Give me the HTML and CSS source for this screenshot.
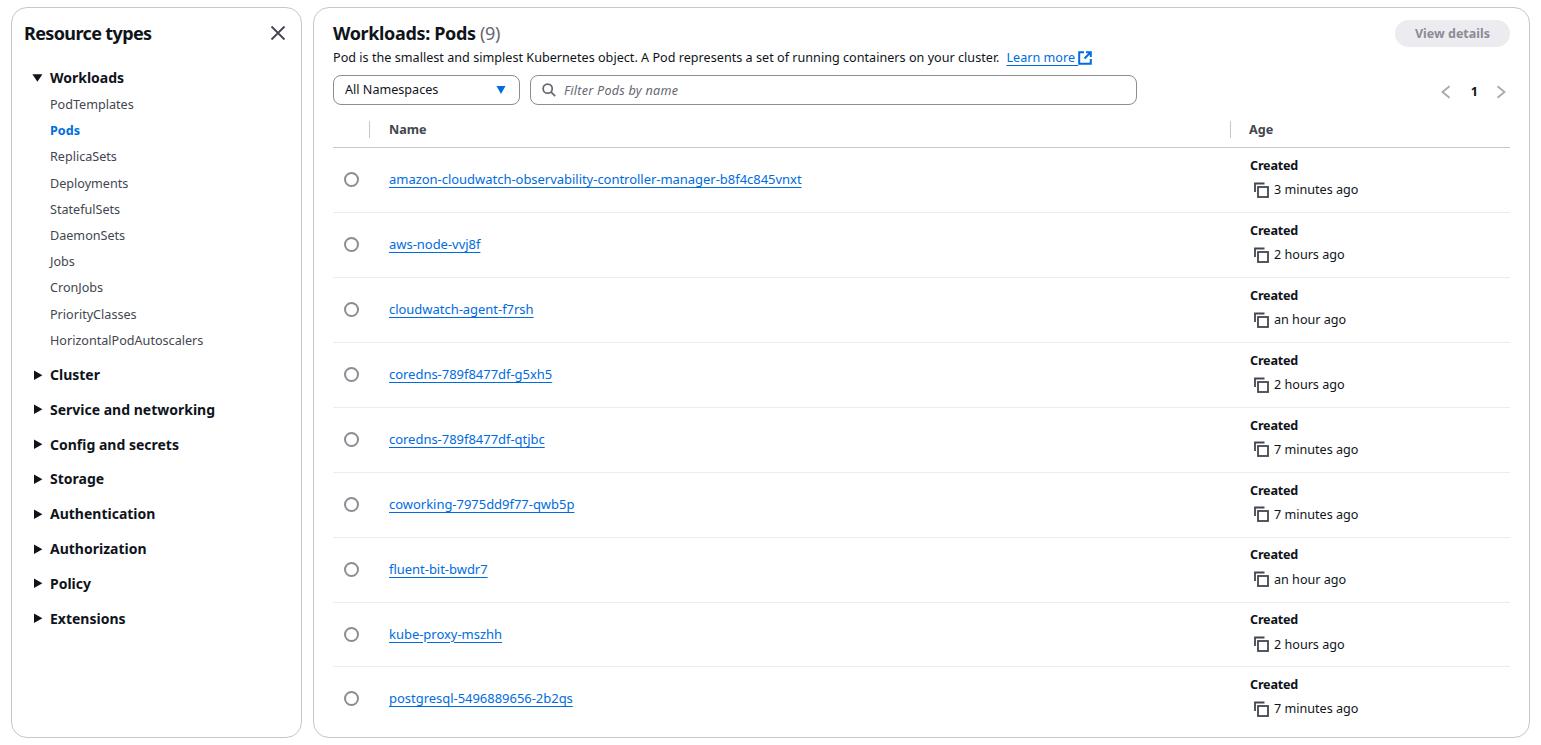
FILE: index.html
```html
<!DOCTYPE html>
<html lang="en">
<head>
<meta charset="utf-8">
<title>Workloads: Pods</title>
<link rel="stylesheet" href="styles.css">
</head>
<body>
<div class="page">
  <aside class="side">
    <div class="side-head">
      <h2 class="side-title">Resource types</h2>
      <svg class="close" width="16" height="16" viewBox="0 0 16 16"><path d="M1.5 1.5l13 13M14.5 1.5l-13 13"/></svg>
    </div>
    <nav class="nav">
      <div class="group open">
        <svg class="caret" width="12" height="12" viewBox="0 0 12 12"><path d="M0.4 3.3h10L5.4 10.7z"/></svg>
        <span>Workloads</span>
      </div>
      <ul class="sublist">
        <li>PodTemplates</li>
        <li class="active">Pods</li>
        <li>ReplicaSets</li>
        <li>Deployments</li>
        <li>StatefulSets</li>
        <li>DaemonSets</li>
        <li>Jobs</li>
        <li>CronJobs</li>
        <li>PriorityClasses</li>
        <li>HorizontalPodAutoscalers</li>
      </ul>
      <div class="group"><svg class="caret" width="12" height="12" viewBox="0 0 12 12"><path d="M2 1.5v9.6L10.4 6.3z"/></svg><span>Cluster</span></div>
      <div class="group"><svg class="caret" width="12" height="12" viewBox="0 0 12 12"><path d="M2 1.5v9.6L10.4 6.3z"/></svg><span>Service and networking</span></div>
      <div class="group"><svg class="caret" width="12" height="12" viewBox="0 0 12 12"><path d="M2 1.5v9.6L10.4 6.3z"/></svg><span>Config and secrets</span></div>
      <div class="group"><svg class="caret" width="12" height="12" viewBox="0 0 12 12"><path d="M2 1.5v9.6L10.4 6.3z"/></svg><span>Storage</span></div>
      <div class="group"><svg class="caret" width="12" height="12" viewBox="0 0 12 12"><path d="M2 1.5v9.6L10.4 6.3z"/></svg><span>Authentication</span></div>
      <div class="group"><svg class="caret" width="12" height="12" viewBox="0 0 12 12"><path d="M2 1.5v9.6L10.4 6.3z"/></svg><span>Authorization</span></div>
      <div class="group"><svg class="caret" width="12" height="12" viewBox="0 0 12 12"><path d="M2 1.5v9.6L10.4 6.3z"/></svg><span>Policy</span></div>
      <div class="group"><svg class="caret" width="12" height="12" viewBox="0 0 12 12"><path d="M2 1.5v9.6L10.4 6.3z"/></svg><span>Extensions</span></div>
    </nav>
  </aside>
  <main class="panel">
    <div class="head">
      <div class="head-text">
        <h1 class="title">Workloads: Pods <span class="count">(9)</span></h1>
        <p class="desc">Pod is the smallest and simplest Kubernetes object. A Pod represents a set of running containers on your cluster.<a class="learn" href="#">Learn more&nbsp;</a><svg class="ext" width="14" height="14" viewBox="0 0 14 14"><path d="M6 1.2H1.2v11.6h11.6V8M8 1.2h4.8V6M12.6 1.4L6.5 7.5"/></svg></p>
      </div>
      <button class="view" type="button" disabled>View details</button>
    </div>
    <div class="tools">
      <div class="select"><span>All Namespaces</span><svg width="12" height="12" viewBox="0 0 12 12"><path d="M1.5 2h9L6 10z"/></svg></div>
      <div class="filter">
        <svg width="14" height="14" viewBox="0 0 16 16"><circle cx="6.5" cy="6.5" r="5.2"/><path d="M10.2 10.2L15 15"/></svg>
        <span>Filter Pods by name</span>
      </div>
      <div class="pager">
        <svg width="14" height="14" viewBox="0 0 14 14"><path d="M10.5 1.2L3.5 7l7 5.8"/></svg>
        <b>1</b>
        <svg width="14" height="14" viewBox="0 0 14 14"><path d="M3.5 1.2l7 5.8-7 5.8"/></svg>
      </div>
    </div>
    <div class="thead">
      <div class="c-radio"></div>
      <div class="c-name"><span>Name</span></div>
      <div class="c-age"><span>Age</span></div>
    </div>
    <div class="row"><div class="c-radio"><i class="radio"></i></div><div class="c-name"><a href="#">amazon-cloudwatch-observability-controller-manager-b8f4c845vnxt</a></div><div class="c-age"><b>Created</b><div class="ago"><svg class="copy" width="16" height="16" viewBox="0 0 16 16"><path d="M1 10V1.5h9.5"/><rect x="4" y="5" width="10" height="10"/></svg>3 minutes ago</div></div></div>
    <div class="row"><div class="c-radio"><i class="radio"></i></div><div class="c-name"><a href="#">aws-node-vvj8f</a></div><div class="c-age"><b>Created</b><div class="ago"><svg class="copy" width="16" height="16" viewBox="0 0 16 16"><path d="M1 10V1.5h9.5"/><rect x="4" y="5" width="10" height="10"/></svg>2 hours ago</div></div></div>
    <div class="row"><div class="c-radio"><i class="radio"></i></div><div class="c-name"><a href="#">cloudwatch-agent-f7rsh</a></div><div class="c-age"><b>Created</b><div class="ago"><svg class="copy" width="16" height="16" viewBox="0 0 16 16"><path d="M1 10V1.5h9.5"/><rect x="4" y="5" width="10" height="10"/></svg>an hour ago</div></div></div>
    <div class="row"><div class="c-radio"><i class="radio"></i></div><div class="c-name"><a href="#">coredns-789f8477df-g5xh5</a></div><div class="c-age"><b>Created</b><div class="ago"><svg class="copy" width="16" height="16" viewBox="0 0 16 16"><path d="M1 10V1.5h9.5"/><rect x="4" y="5" width="10" height="10"/></svg>2 hours ago</div></div></div>
    <div class="row"><div class="c-radio"><i class="radio"></i></div><div class="c-name"><a href="#">coredns-789f8477df-qtjbc</a></div><div class="c-age"><b>Created</b><div class="ago"><svg class="copy" width="16" height="16" viewBox="0 0 16 16"><path d="M1 10V1.5h9.5"/><rect x="4" y="5" width="10" height="10"/></svg>7 minutes ago</div></div></div>
    <div class="row"><div class="c-radio"><i class="radio"></i></div><div class="c-name"><a href="#">coworking-7975dd9f77-qwb5p</a></div><div class="c-age"><b>Created</b><div class="ago"><svg class="copy" width="16" height="16" viewBox="0 0 16 16"><path d="M1 10V1.5h9.5"/><rect x="4" y="5" width="10" height="10"/></svg>7 minutes ago</div></div></div>
    <div class="row"><div class="c-radio"><i class="radio"></i></div><div class="c-name"><a href="#">fluent-bit-bwdr7</a></div><div class="c-age"><b>Created</b><div class="ago"><svg class="copy" width="16" height="16" viewBox="0 0 16 16"><path d="M1 10V1.5h9.5"/><rect x="4" y="5" width="10" height="10"/></svg>an hour ago</div></div></div>
    <div class="row"><div class="c-radio"><i class="radio"></i></div><div class="c-name"><a href="#">kube-proxy-mszhh</a></div><div class="c-age"><b>Created</b><div class="ago"><svg class="copy" width="16" height="16" viewBox="0 0 16 16"><path d="M1 10V1.5h9.5"/><rect x="4" y="5" width="10" height="10"/></svg>2 hours ago</div></div></div>
    <div class="row last"><div class="c-radio"><i class="radio"></i></div><div class="c-name"><a href="#">postgresql-5496889656-2b2qs</a></div><div class="c-age"><b>Created</b><div class="ago"><svg class="copy" width="16" height="16" viewBox="0 0 16 16"><path d="M1 10V1.5h9.5"/><rect x="4" y="5" width="10" height="10"/></svg>7 minutes ago</div></div></div>
  </main>
</div>
</body>
</html>
```
FILE: styles.css
```css
* { box-sizing: border-box; }
html, body { margin: 0; height: 100%; background: #fff; overflow: hidden; }
body { font-family: "Noto Sans", sans-serif; font-size: 12.6px; color: #0f141a; }
.page { display: flex; gap: 11px; padding: 7px 11px; width: 1541px; height: 745px; }
.side, .panel { border: 1px solid #c6c6cd; border-radius: 16px; background: #fff; height: 731px; }
.side { width: 291px; flex: none; padding: 12px 12px 0 12px; }
.panel { width: 1217px; flex: none; padding: 12px 19px 0 19px; }
.side-head { display: flex; justify-content: space-between; align-items: center; height: 26px; padding-right: 3.5px; }
.side-title { margin: 0; font-size: 18px; font-weight: 700; letter-spacing: -0.62px; }
.close { fill: none; stroke: #424650; stroke-width: 1.8; }
.nav { margin-top: 18px; padding-left: 8px; }
.group { display: flex; align-items: center; gap: 6px; height: 34.8px; font-size: 14px; font-weight: 700; }
.group.open { height: 26px; }
.caret { fill: #0f141a; flex: none; }
.sublist { list-style: none; margin: 2.1px 0 3.2px; padding: 0 0 0 18px; }
.sublist li { height: 26.2px; line-height: 26.2px; color: #424650; }
.sublist li.active { color: #006ce0; font-weight: 700; }
.group, .sublist li { white-space: nowrap; }
.head { display: flex; justify-content: space-between; align-items: flex-start; }
.title { margin: 0; font-size: 18px; line-height: 26px; font-weight: 700; letter-spacing: -0.35px; }
.count { font-weight: 400; color: #656871; }
.desc { margin: 3px 0 0; line-height: 18px; white-space: nowrap; display: flex; align-items: center; letter-spacing: 0.018px; }
.learn { color: #006ce0; margin-left: 7px; letter-spacing: 0; text-decoration: underline; text-underline-offset: 3px; }
.ext { fill: none; stroke: #006ce0; stroke-width: 2; }
.view { height: 27px; width: 115px; border: 0; border-radius: 14px; background: #ebebf0; color: #8c8c94; font: 700 12.5px "Noto Sans", sans-serif; padding: 0; }
.tools { display: flex; align-items: center; margin-top: 8px; height: 30px; }
.select { width: 187px; height: 30px; border: 1px solid #8c8c94; border-radius: 8px; display: flex; align-items: center; justify-content: space-between; padding: 0 12px 0 11px; }
.select span { padding-bottom: 1px; }
.select svg { fill: #006ce0; }
.filter { width: 607px; height: 30px; margin-left: 10px; border: 1px solid #8c8c94; border-radius: 8px; display: flex; align-items: center; gap: 8px; padding: 0 11px; }
.filter svg { fill: none; stroke: #656871; stroke-width: 2; }
.filter span { font-style: italic; color: #656871; letter-spacing: 0.25px; }
.pager { margin-left: auto; display: flex; align-items: center; gap: 17px; padding-right: 2px; margin-top: 3px; }
.pager svg { fill: none; stroke: #a8a8b0; stroke-width: 1.8; }
.pager b { margin: 0 -1px 0 1px; }
.thead { display: flex; height: 43.3px; border-bottom: 1px solid #c6c6cd; align-items: center; padding-top: 7px; color: #424650; font-weight: 700; }
.c-radio { width: 37px; flex: none; display: flex; justify-content: center; }
.row .c-radio { padding-bottom: 0.8px; }
.c-name { width: 861px; flex: none; padding-left: 19px; }
.row .c-name { padding-bottom: 1.8px; }
.c-age { flex: 1; padding-left: 19px; }
.thead .c-name, .thead .c-age { border-left: 1px solid #c6c6cd; height: 17px; line-height: 17px; }
.thead .c-age { padding-left: 18px; }
.thead .c-radio { height: 17px; }
.thead .c-name { margin-left: -1px; }
.row { display: flex; height: 64.9px; align-items: center; border-bottom: 1px solid #ebebf0; }
.row.last { border-bottom-color: transparent; }
.radio { width: 15px; height: 15px; border: 2px solid #8c8c94; border-radius: 50%; display: block; }
.row .c-name a { color: #006ce0; text-decoration: underline; text-underline-offset: 3px; font-size: 13px; letter-spacing: -0.03px; }
.row .c-age b { display: block; line-height: 18px; margin-top: -4.6px; letter-spacing: -0.2px; }
.ago { display: flex; align-items: center; gap: 4px; height: 18px; margin-top: 5.8px; padding-left: 4px; }
.copy { fill: none; stroke: #424650; stroke-width: 1.8; flex: none; }
```
